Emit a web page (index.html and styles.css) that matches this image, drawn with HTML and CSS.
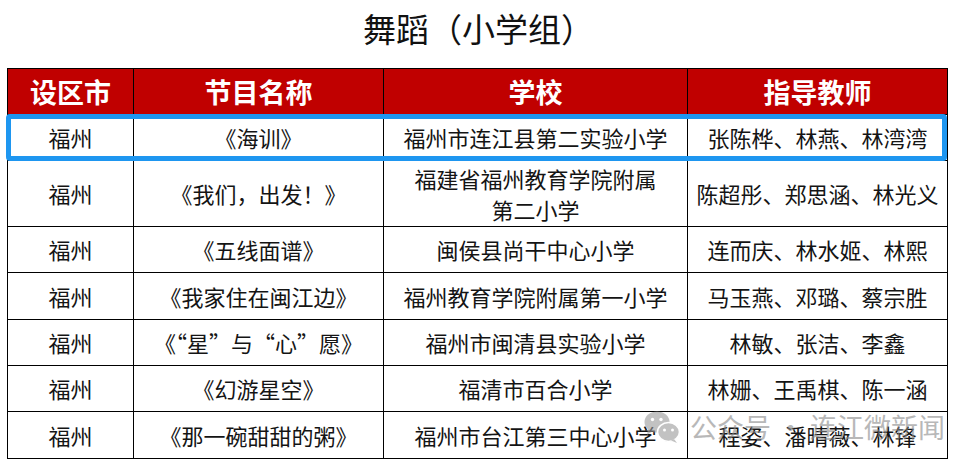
FILE: index.html
```html
<!DOCTYPE html>
<html lang="zh-CN">
<head>
<meta charset="utf-8">
<title>舞蹈（小学组）</title>
<link rel="stylesheet" href="styles.css">
</head>
<body>
<h1 class="title">舞蹈（小学组）</h1>
<div class="wrap">
  <table class="grid">
    <colgroup>
      <col class="c1"><col class="c2"><col class="c3"><col class="c4">
    </colgroup>
    <thead>
      <tr class="head"><th>设区市</th><th>节目名称</th><th>学校</th><th>指导教师</th></tr>
    </thead>
    <tbody>
      <tr class="r46"><td>福州</td><td>《海训》</td><td>福州市连江县第二实验小学</td><td>张陈桦、林燕、林湾湾</td></tr>
      <tr class="r66"><td>福州</td><td>《我们，出发！》</td><td>福建省福州教育学院附属<br>第二小学</td><td>陈超彤、郑思涵、林光义</td></tr>
      <tr class="r46"><td>福州</td><td>《五线面谱》</td><td>闽侯县尚干中心小学</td><td>连而庆、林水姬、林熙</td></tr>
      <tr class="r47"><td>福州</td><td>《我家住在闽江边》</td><td>福州教育学院附属第一小学</td><td>马玉燕、邓璐、蔡宗胜</td></tr>
      <tr class="r46"><td>福州</td><td>《“星”与“心”愿》</td><td>福州市闽清县实验小学</td><td>林敏、张洁、李鑫</td></tr>
      <tr class="r46"><td>福州</td><td>《幻游星空》</td><td>福清市百合小学</td><td>林姗、王禹棋、陈一涵</td></tr>
      <tr class="r47"><td>福州</td><td>《那一碗甜甜的粥》</td><td>福州市台江第三中心小学</td><td>程姿、潘晴薇、林锋</td></tr>
    </tbody>
  </table>
  <div class="highlight"></div>
  <div class="watermark">
    <svg class="wx" width="36" height="32" viewBox="0 0 36 32">
      <ellipse cx="13" cy="11" rx="12.5" ry="10.5" fill="#9a9a9a"/>
      <path d="M4 18 L3 24 L9 20 Z" fill="#9a9a9a"/>
      <ellipse cx="24.5" cy="21" rx="11" ry="9.5" fill="#9a9a9a" stroke="#fff" stroke-width="1.6"/>
      <path d="M30 28 L33 32 L27 29.5 Z" fill="#9a9a9a"/>
      <circle cx="8.5" cy="8.5" r="1.7" fill="#fff"/>
      <circle cx="17" cy="8.5" r="1.7" fill="#fff"/>
      <circle cx="20.5" cy="19" r="1.5" fill="#fff"/>
      <circle cx="28.5" cy="19" r="1.5" fill="#fff"/>
    </svg>
    <span class="wm-text">公众号 · 连江微新闻</span>
  </div>
</div>
</body>
</html>
```
FILE: styles.css
```css
html, body {
  margin: 0;
  padding: 0;
  background: #fff;
}
body {
  width: 957px;
  height: 467px;
  overflow: hidden;
  font-family: "Noto Sans CJK SC", "Noto Sans", sans-serif;
  color: #111;
}
.title {
  margin: 0;
  padding-top: 8px;
  height: 40px;
  line-height: 40px;
  font-size: 33px;
  font-weight: 400;
  text-align: center;
  color: #111;
}
.wrap {
  position: relative;
  margin: 20px 0 0 7px;
  width: 940px;
}
.grid {
  border-collapse: collapse;
  table-layout: fixed;
  width: 940px;
}
.c1 { width: 126px; }
.c2 { width: 250px; }
.c3 { width: 304px; }
.c4 { width: 260px; }
.grid th, .grid td {
  border: 1px solid #000;
  padding: 0;
  text-align: center;
  vertical-align: middle;
}
.head th {
  height: 45px;
  background: #c00000;
  color: #fff;
  font-size: 27px;
  font-weight: 700;
  line-height: 30px;
}
.grid td {
  font-size: 22px;
  line-height: 31px;
  color: #141414;
}
.r46 td { height: 45px; }
.r47 td { height: 46px; }
.r66 td { height: 65px; }
.highlight {
  position: absolute;
  left: -1px;
  top: 46px;
  width: 941px;
  height: 47px;
  box-sizing: border-box;
  border: 5px solid #1e96f0;
  border-radius: 4px;
  pointer-events: none;
}
.watermark {
  position: absolute;
  left: 637px;
  top: 343px;
  display: flex;
  align-items: center;
  gap: 10px;
  opacity: 0.6;
  pointer-events: none;
}
.wm-text {
  font-size: 27px;
  line-height: 32px;
  color: #8a8a8a;
  white-space: nowrap;
}
```
